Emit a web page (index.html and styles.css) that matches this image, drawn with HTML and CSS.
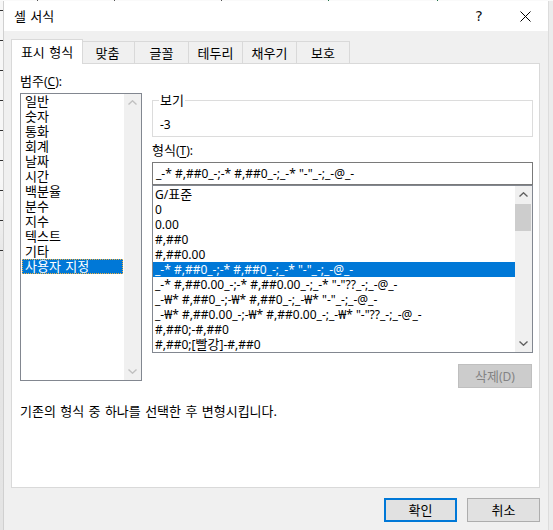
FILE: index.html
```html
<!DOCTYPE html>
<html lang="ko">
<head>
<meta charset="utf-8">
<title>셀 서식</title>
<link rel="stylesheet" href="styles.css">
</head>
<body>
<div class="screen">
  <div class="top-strip"></div>
  <div class="main">
    <div class="left-strip"></div>
    <div class="dialog">
      <div class="titlebar">
        <span class="title ko">셀 서식</span>
        <span class="tb-btn help">?</span>
        <span class="tb-btn close">
          <svg width="11" height="11" viewBox="0 0 11 11"><path d="M0.5 0.5 L10.5 10.5 M10.5 0.5 L0.5 10.5" stroke="#000" stroke-width="1" fill="none"/></svg>
        </span>
      </div>
      <div class="body">
        <div class="tabs ko">
          <div class="tab active">표시 형식</div>
          <div class="tab">맞춤</div>
          <div class="tab">글꼴</div>
          <div class="tab">테두리</div>
          <div class="tab">채우기</div>
          <div class="tab last">보호</div>
        </div>
        <div class="panel">
          <div class="cols">
            <div class="col-left">
              <div class="label"><span class="ko">범주</span>(<u>C</u>):</div>
              <div class="listbox cat">
                <div class="items ko">
                  <div class="item">일반</div>
                  <div class="item">숫자</div>
                  <div class="item">통화</div>
                  <div class="item">회계</div>
                  <div class="item">날짜</div>
                  <div class="item">시간</div>
                  <div class="item">백분율</div>
                  <div class="item">분수</div>
                  <div class="item">지수</div>
                  <div class="item">텍스트</div>
                  <div class="item">기타</div>
                  <div class="item selected focused">사용자 지정</div>
                </div>
                <div class="vscroll disabled">
                  <div class="arrow"><svg width="9" height="5" viewBox="0 0 9 5"><polyline points="0.5,4.5 4.5,0.8 8.5,4.5" fill="none" stroke-width="1.4"/></svg></div>
                  <div class="track"></div>
                  <div class="arrow"><svg width="9" height="5" viewBox="0 0 9 5"><polyline points="0.5,0.5 4.5,4.2 8.5,0.5" fill="none" stroke-width="1.4"/></svg></div>
                </div>
              </div>
            </div>
            <div class="col-right">
              <fieldset class="sample">
                <legend class="ko">보기</legend>
                <div class="sample-value">-3</div>
              </fieldset>
              <div class="label fmt-label"><span class="ko">형식</span>(<u>T</u>):</div>
              <div class="input">_-* #,##0_-;-* #,##0_-;_-* "-"_-;_-@_-</div>
              <div class="listbox fmt">
                <div class="items">
                  <div class="item">G/<span class="ko">표준</span></div>
                  <div class="item">0</div>
                  <div class="item">0.00</div>
                  <div class="item">#,##0</div>
                  <div class="item">#,##0.00</div>
                  <div class="item selected">_-* #,##0_-;-* #,##0_-;_-* "-"_-;_-@_-</div>
                  <div class="item">_-* #,##0.00_-;-* #,##0.00_-;_-* "-"??_-;_-@_-</div>
                  <div class="item">_-₩* #,##0_-;-₩* #,##0_-;_-₩* "-"_-;_-@_-</div>
                  <div class="item">_-₩* #,##0.00_-;-₩* #,##0.00_-;_-₩* "-"??_-;_-@_-</div>
                  <div class="item">#,##0;-#,##0</div>
                  <div class="item">#,##0;[<span class="ko">빨강</span>]-#,##0</div>
                </div>
                <div class="vscroll">
                  <div class="arrow"><svg width="9" height="5" viewBox="0 0 9 5"><polyline points="0.5,4.5 4.5,0.8 8.5,4.5" fill="none" stroke-width="1.4"/></svg></div>
                  <div class="track"><div class="thumb"></div></div>
                  <div class="arrow"><svg width="9" height="5" viewBox="0 0 9 5"><polyline points="0.5,0.5 4.5,4.2 8.5,0.5" fill="none" stroke-width="1.4"/></svg></div>
                </div>
              </div>
              <div class="btn-row"><div class="btn disabled"><span class="ko">삭제</span>(D)</div></div>
            </div>
          </div>
          <div class="help-text ko">기존의 형식 중 하나를 선택한 후 변형시킵니다.</div>
        </div>
        <div class="footer ko">
          <div class="btn default">확인</div>
          <div class="btn">취소</div>
        </div>
      </div>
    </div>
    <div class="right-strip"></div>
  </div>
</div>
</body>
</html>
```
FILE: styles.css
```css
* { box-sizing: border-box; }
html, body { margin: 0; padding: 0; }
body {
  font-family: "Noto Sans", "Noto Sans CJK KR", sans-serif;
  font-size: 12px;
  line-height: 15px;
  color: #000;
  background: #f0f0f0;
}
.ko {
  font-size: 13px;
  word-spacing: 1px;
}
.screen {
  width: 553px;
  height: 530px;
  overflow: hidden;
  display: flex;
  flex-direction: column;
  background: #f0f0f0;
}
.top-strip {
  height: 1px;
  flex: none;
  background:
    linear-gradient(#555, #555) 37px 0 / 1px 1px no-repeat,
    linear-gradient(#555, #555) 114px 0 / 1px 1px no-repeat,
    linear-gradient(#555, #555) 221px 0 / 1px 1px no-repeat,
    linear-gradient(#217346, #217346) 328px 0 / 1px 1px no-repeat,
    linear-gradient(#217346, #217346) 437px 0 / 1px 1px no-repeat,
    #fafafa;
}
.main {
  flex: 1;
  display: flex;
  min-height: 0;
}
.left-strip {
  width: 4px;
  flex: none;
  border-right: 1px solid #d0d0d0;
  background:
    repeating-linear-gradient(to bottom, transparent 0 9px, #333 9px 10px, transparent 10px 30px) 0 0 / 3px 252px no-repeat,
    linear-gradient(to bottom, #f7f7f7 0, #f7f7f7 180px, #e6e6e6 260px, #e4e4e4 100%);
}
.dialog {
  width: 544px;
  flex: none;
  display: flex;
  flex-direction: column;
  background: #f0f0f0;
}
.right-strip {
  flex: 1;
  border-left: 1px solid #dcdcdc;
  background: #ececec;
}
.titlebar {
  height: 30px;
  flex: none;
  background: #fff;
  display: flex;
  align-items: center;
}
.title {
  flex: 1;
  padding-left: 10px;
}
.tb-btn {
  width: 46px;
  height: 30px;
  display: flex;
  align-items: center;
  justify-content: center;
}
.help {
  font-family: "DejaVu Sans", sans-serif;
  font-size: 14px;
  color: #111;
  padding-top: 1px;
}
.body {
  flex: 1;
  padding: 8px 8px 0 7px;
}
.tabs {
  display: flex;
  align-items: flex-end;
  height: 24px;
}
.tab {
  width: 54px;
  height: 22px;
  border: 1px solid #d9d9d9;
  border-bottom: none;
  border-left: none;
  background: #f0f0f0;
  display: flex;
  align-items: center;
  justify-content: center;
  padding-top: 1px;
}
.tab.last { width: 53px; }
.tab.active {
  position: relative;
  z-index: 1;
  height: 25px;
  margin-bottom: -1px;
  margin-right: -2px;
  width: 72px;
  background: #fff;
  border-left: 1px solid #d9d9d9;
  padding-bottom: 1px;
}
.panel {
  height: 425px;
  background: #fff;
  border: 1px solid #d9d9d9;
  padding: 10px 6px 0 8px;
  display: flex;
  flex-direction: column;
}
.cols {
  display: flex;
  gap: 10px;
}
.col-left {
  width: 122px;
  flex: none;
  display: flex;
  flex-direction: column;
}
.col-right {
  width: 381px;
  flex: none;
  display: flex;
  flex-direction: column;
}
.label {
  height: 15px;
}
.label u { text-decoration-thickness: 1px; text-underline-offset: 2px; }
.col-left .label { margin-bottom: 4px; }
.listbox {
  border: 1px solid #828790;
  background: #fff;
  display: flex;
}
.listbox.cat { height: 288px; }
.listbox.fmt { height: 168px; }
.items {
  flex: 1;
  min-width: 0;
}
.cat .items { padding: 0 1px; }
.fmt .items { padding-top: 1px; }
.item {
  height: 15px;
  white-space: pre;
}
.cat .item { padding-left: 3px; }
.fmt .item { padding-left: 2px; }
.item.selected {
  background: #0078d7;
  color: #fff;
}
.item.focused {
  outline: 1px dotted #f0b040;
  outline-offset: -1px;
}
.vscroll {
  width: 17px;
  flex: none;
  background: #f0f0f0;
  display: flex;
  flex-direction: column;
}
.arrow {
  height: 17px;
  flex: none;
  display: flex;
  align-items: center;
  justify-content: center;
}
.arrow svg polyline { stroke: #606060; }
.vscroll.disabled .arrow svg polyline { stroke: #c0c0c0; }
.track {
  flex: 1;
}
.thumb {
  height: 27px;
  margin: 1px 1px 0 0;
  background: #cdcdcd;
}
.sample {
  margin: 19px 0 0 0;
  padding: 9px 7px 4px 7px;
  border: 1px solid #dcdcdc;
  min-width: 0;
}
.sample legend {
  padding: 0 1px;
  margin-left: -1px;
  line-height: 15px;
}
.sample-value {
  height: 15px;
}
.fmt-label { margin-top: 6px; }
.input {
  margin-top: 4px;
  height: 23px;
  border: 1px solid #7a7a7a;
  padding: 3px 0 0 3px;
  white-space: pre;
}
.btn-row {
  display: flex;
  justify-content: flex-end;
  margin-top: 11px;
  padding-right: 1px;
}
.btn {
  width: 73px;
  height: 24px;
  border: 1px solid #adadad;
  background: #e1e1e1;
  display: flex;
  align-items: center;
  justify-content: center;
}
.btn.disabled {
  width: 74px;
  border-color: #bfbfbf;
  background: #cccccc;
  color: #838383;
}
.btn.default {
  border: 2px solid #0078d7;
}
.help-text {
  margin-top: 16px;
}
.footer {
  display: flex;
  justify-content: flex-end;
  gap: 10px;
  margin-top: 10px;
}
```
